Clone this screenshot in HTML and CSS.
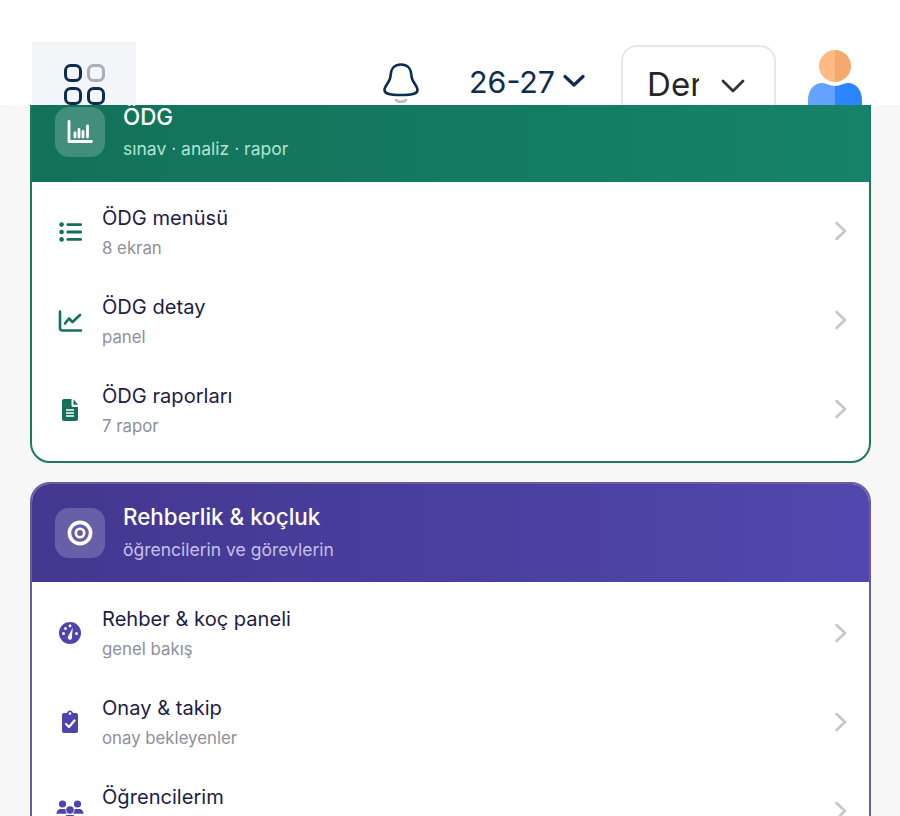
FILE: index.html
```html
<!DOCTYPE html>
<html lang="tr">
<head>
    <meta charset="UTF-8">
    <meta name="viewport" content="width=device-width, initial-scale=1.0">
    <title>Menü</title>
    <link rel="stylesheet" href="styles.css">
</head>
<body>
    <header class="topbar">
        <div class="grid-btn">
            <svg width="44" height="44" viewBox="0 0 44 44" fill="none" stroke-width="3">
                <rect x="1.5" y="1.5" width="15" height="15" rx="5" stroke="#0c2d4f"/>
                <rect x="24.5" y="1.5" width="15" height="15" rx="5" stroke="#a6aeb9"/>
                <rect x="1.5" y="24.5" width="15" height="15" rx="5" stroke="#0c2d4f"/>
                <rect x="24.5" y="24.5" width="15" height="15" rx="5" stroke="#0c2d4f"/>
            </svg>
        </div>
        <svg class="bell" width="36" height="42" viewBox="0 0 36 42" fill="none">
            <path d="M18 1.5C10.5 1.5 7.5 7 7.5 13C7.5 19 1.5 22 1.5 27C1.5 30.5 5 32 18 32C31 32 34.5 30.5 34.5 27C34.5 22 28.5 19 28.5 13C28.5 7 25.5 1.5 18 1.5Z" stroke="#0c2d4f" stroke-width="2.6"/>
            <path d="M13 37C15.5 39.5 20.5 39.5 23 37" stroke="#b9bfc8" stroke-width="2.6" stroke-linecap="round"/>
        </svg>
        <div class="year">
            <span>26-27</span>
            <svg width="22" height="14" viewBox="0 0 22 14" fill="none"><path d="M2 2.5L11 11L20 2.5" stroke="#0c2d4f" stroke-width="3.2" stroke-linecap="round" stroke-linejoin="round"/></svg>
        </div>
        <div class="select-box">
            <span class="select-text">Ders</span>
            <svg width="24" height="14" viewBox="0 0 24 14" fill="none"><path d="M2 2L12 12L22 2" stroke="#333" stroke-width="2.8" stroke-linecap="round" stroke-linejoin="round"/></svg>
        </div>
        <svg class="avatar" width="56" height="64" viewBox="0 0 56 64">
            <path d="M28 0a16 16 0 0 0 0 32Z" fill="#fdba82"/>
            <path d="M28 0a16 16 0 0 1 0 32Z" fill="#f5a96b"/>
            <path d="M28 36C22 36 20 33 15 33C7 33 1 40 1 50V64H28Z" fill="#64a2ff"/>
            <path d="M28 36C34 36 36 33 41 33C49 33 55 40 55 50V64H28Z" fill="#2a85ff"/>
        </svg>
    </header>

    <main class="content">
        <section class="card card-green">
            <div class="card-head">
                <div class="head-icon">
                    <svg width="26" height="26" viewBox="0 0 26 26" fill="none">
                        <path d="M2 2.5V22.5H24.5" stroke="#fff" stroke-width="2.8" stroke-linecap="round" stroke-linejoin="round"/>
                        <path d="M8 14V18M12 10.5V18M16 12.5V18M20.5 7V18" stroke="#fff" stroke-width="2.8" stroke-linecap="round"/>
                    </svg>
                </div>
                <div class="head-text">
                    <div class="head-title">ÖDG</div>
                    <div class="head-sub">sınav · analiz · rapor</div>
                </div>
            </div>
            <div class="card-body">
                <a class="row">
                    <svg class="row-icon" viewBox="0 0 24 24" fill="#13705a">
                        <circle cx="3.6" cy="4.6" r="2.3"/><circle cx="3.6" cy="12" r="2.3"/><circle cx="3.6" cy="19.4" r="2.3"/>
                        <rect x="8.5" y="3.2" width="15.5" height="2.8" rx="1.2"/><rect x="8.5" y="10.6" width="15.5" height="2.8" rx="1.2"/><rect x="8.5" y="18" width="15.5" height="2.8" rx="1.2"/>
                    </svg>
                    <div class="row-text">
                        <div class="row-title">ÖDG menüsü</div>
                        <div class="row-sub">8 ekran</div>
                    </div>
                    <svg class="chev" width="14" height="20" viewBox="0 0 14 20" fill="none"><path d="M2.5 2L11 10L2.5 18" stroke="#c6c6cd" stroke-width="2.6" stroke-linecap="round" stroke-linejoin="round"/></svg>
                </a>
                <a class="row">
                    <svg class="row-icon" viewBox="0 0 24 24" fill="none" stroke="#13705a" stroke-width="2.6" stroke-linecap="round" stroke-linejoin="round">
                        <path d="M2 2.5V19C2 20.5 3 21.5 4.5 21.5H23"/>
                        <path d="M7 14.5L11 9.5L14.5 13L22 6"/>
                    </svg>
                    <div class="row-text">
                        <div class="row-title">ÖDG detay</div>
                        <div class="row-sub">panel</div>
                    </div>
                    <svg class="chev" width="14" height="20" viewBox="0 0 14 20" fill="none"><path d="M2.5 2L11 10L2.5 18" stroke="#c6c6cd" stroke-width="2.6" stroke-linecap="round" stroke-linejoin="round"/></svg>
                </a>
                <a class="row">
                    <svg class="row-icon" viewBox="0 0 24 24" fill="#13705a">
                        <path d="M6 1H13.5V7.5C13.5 8.3 14.2 9 15 9H20V21C20 22.1 19.1 23 18 23H6C4.9 23 4 22.1 4 21V3C4 1.9 4.9 1 6 1Z"/>
                        <path d="M15.5 1.2L20 6.8H15.5Z"/>
                        <path d="M8 12H16M8 15H16M8 18H16" stroke="#fff" stroke-width="1.6"/>
                    </svg>
                    <div class="row-text">
                        <div class="row-title">ÖDG raporları</div>
                        <div class="row-sub">7 rapor</div>
                    </div>
                    <svg class="chev" width="14" height="20" viewBox="0 0 14 20" fill="none"><path d="M2.5 2L11 10L2.5 18" stroke="#c6c6cd" stroke-width="2.6" stroke-linecap="round" stroke-linejoin="round"/></svg>
                </a>
            </div>
        </section>

        <section class="card card-purple">
            <div class="card-head">
                <div class="head-icon">
                    <svg width="26" height="26" viewBox="0 0 26 26" fill="none" stroke="#fff">
                        <circle cx="13" cy="13" r="10.6" stroke-width="3.6"/>
                        <circle cx="13" cy="13" r="4.2" stroke-width="2.6"/>
                    </svg>
                </div>
                <div class="head-text">
                    <div class="head-title">Rehberlik &amp; koçluk</div>
                    <div class="head-sub">öğrencilerin ve görevlerin</div>
                </div>
            </div>
            <div class="card-body">
                <a class="row">
                    <svg class="row-icon" viewBox="0 0 24 24">
                        <circle cx="12" cy="12" r="11" fill="#4f44ab"/>
                        <path d="M14.8 6.5L13.9 15.5A2.2 2.2 0 1 1 10.2 15.2Z" fill="#fff"/>
                        <circle cx="5.5" cy="12.5" r="1.5" fill="#fff"/><circle cx="7.5" cy="7.5" r="1.5" fill="#fff"/><circle cx="12" cy="5" r="1.4" fill="#fff"/><circle cx="18.5" cy="12.5" r="1.5" fill="#fff"/>
                    </svg>
                    <div class="row-text">
                        <div class="row-title">Rehber &amp; koç paneli</div>
                        <div class="row-sub">genel bakış</div>
                    </div>
                    <svg class="chev" width="14" height="20" viewBox="0 0 14 20" fill="none"><path d="M2.5 2L11 10L2.5 18" stroke="#c6c6cd" stroke-width="2.6" stroke-linecap="round" stroke-linejoin="round"/></svg>
                </a>
                <a class="row">
                    <svg class="row-icon" viewBox="0 0 24 24">
                        <path d="M6 3H9C9.3 1.6 10.5 0.6 12 0.6C13.5 0.6 14.7 1.6 15 3H18C19.1 3 20 3.9 20 5V21C20 22.1 19.1 23 18 23H6C4.9 23 4 22.1 4 21V5C4 3.9 4.9 3 6 3Z" fill="#4f44ab"/>
                        <circle cx="12" cy="3.6" r="1.3" fill="#fff"/>
                        <path d="M8 14L11 17L16.5 10.5" fill="none" stroke="#fff" stroke-width="2.2" stroke-linecap="round" stroke-linejoin="round"/>
                    </svg>
                    <div class="row-text">
                        <div class="row-title">Onay &amp; takip</div>
                        <div class="row-sub">onay bekleyenler</div>
                    </div>
                    <svg class="chev" width="14" height="20" viewBox="0 0 14 20" fill="none"><path d="M2.5 2L11 10L2.5 18" stroke="#c6c6cd" stroke-width="2.6" stroke-linecap="round" stroke-linejoin="round"/></svg>
                </a>
                <a class="row">
                    <svg class="row-icon row-icon-wide" viewBox="0 0 28 24" fill="#4f44ab">
                        <circle cx="6.5" cy="5" r="3.6"/><circle cx="21.5" cy="5" r="3.6"/><circle cx="14" cy="11" r="3.8"/>
                        <path d="M0.5 15C0.5 11.5 2.5 10 5 10H8.5C8.9 10 9.3 10.1 9.6 10.2C9.3 12 10 13.7 11 14.8H0.5Z"/>
                        <path d="M27.5 15C27.5 11.5 25.5 10 23 10H19.5C19.1 10 18.7 10.1 18.4 10.2C18.7 12 18 13.7 17 14.8H27.5Z"/>
                        <path d="M7 22C7 18.5 9 16 12 16H16C19 16 21 18.5 21 22V23H7Z"/>
                    </svg>
                    <div class="row-text">
                        <div class="row-title">Öğrencilerim</div>
                        <div class="row-sub"></div>
                    </div>
                    <svg class="chev" width="14" height="20" viewBox="0 0 14 20" fill="none"><path d="M2.5 2L11 10L2.5 18" stroke="#c6c6cd" stroke-width="2.6" stroke-linecap="round" stroke-linejoin="round"/></svg>
                </a>
            </div>
        </section>
    </main>
</body>
</html>
```

FILE: styles.css
```css
* {
    box-sizing: border-box;
}
html, body {
    margin: 0;
    height: 816px;
    overflow: hidden;
}
body {
    position: relative;
    font-family: Inter, "Noto Sans", sans-serif;
    background: #f7f7f8;
}

/* top bar sits over the scrolled list */
.topbar {
    position: absolute;
    top: 0;
    left: 0;
    width: 100%;
    height: 105px;
    z-index: 10;
    overflow: hidden;
    background: #fff;
    display: flex;
    align-items: flex-start;
    padding: 42px 0 0 32px;
}
.topbar > * {
    flex-shrink: 0;
}
.grid-btn {
    width: 104px;
    height: 104px;
    padding: 22px 0 0 32px;
    background: #f3f5f9;
}
.grid-btn svg {
    display: block;
}
.bell {
    margin: 21px 0 0 247px;
}
.year {
    margin: 18px 0 0 50px;
    display: flex;
    align-items: center;
    gap: 8px;
    white-space: nowrap;
    font-size: 30.4px;
    line-height: 44px;
    color: #0c2d4f;
}
.year svg {
    margin-top: -3px;
}
.select-box {
    margin: 3px 0 0 36px;
    width: 155px;
    height: 90px;
    border: 2px solid #e8e8ea;
    border-radius: 16px;
    background: #fff;
    display: flex;
    align-items: flex-start;
    padding: 14px 0 0 24px;
}
.select-text {
    width: 52px;
    overflow: hidden;
    font-size: 33px;
    line-height: 46px;
    color: #262626;
}
.select-box svg {
    margin: 18px 0 0 22px;
}
.avatar {
    margin: 8px 0 0 31px;
}

.content {
    padding: 81px 29.5px 0 30px;
    display: flex;
    flex-direction: column;
    gap: 19px;
}
.card {
    background: #fff;
    border: 2px solid;
    border-radius: 20px;
    overflow: hidden;
}
.card-green { border-color: #1a7a5e; }
.card-purple { border-color: #6a5c9e; }

.card-head {
    height: 98px;
    display: flex;
    align-items: center;
    gap: 18px;
    padding: 0 23px;
}
.card-green .card-head {
    height: 99px;
    padding-bottom: 1px;
    background: linear-gradient(90deg, #127259, #16826a);
}
.card-purple .card-head {
    background: linear-gradient(90deg, #43378f, #5147ae);
}
.head-icon {
    width: 50px;
    height: 50px;
    border-radius: 14px;
    background: rgba(255,255,255,0.2);
    display: flex;
    align-items: center;
    justify-content: center;
    flex-shrink: 0;
}
.head-text {
    margin-top: -2px;
}
.head-title {
    font-size: 22.4px;
    font-weight: 500;
    line-height: 30px;
    color: #fff;
}
.head-sub {
    font-size: 17.5px;
    line-height: 24px;
    margin-top: 6px;
}
.card-green .head-sub {
    margin-top: 5px;
    color: #b0e6d0;
}
.card-purple .head-sub { color: #c5c0ea; }

.card-body {
    padding: 6px 0 7px;
}
.card-green .card-body {
    padding: 5px 0 7px;
}
.row {
    height: 89px;
    display: flex;
    align-items: center;
    padding: 0 21px 0 26px;
}
.row-icon {
    width: 24px;
    height: 24px;
    flex-shrink: 0;
    margin-right: 20px;
}
.row-icon-wide {
    width: 28px;
    margin-left: -2px;
    margin-right: 18px;
}
.row-text {
    flex: 1;
}
.row-title {
    font-size: 20.1px;
    line-height: 28px;
    color: #1d1d47;
}
.row-sub {
    font-size: 16.8px;
    line-height: 22px;
    min-height: 22px;
    margin-top: 5px;
    color: #8f8f9c;
}
.card-green .chev {
    margin-top: -2px;
}
```
